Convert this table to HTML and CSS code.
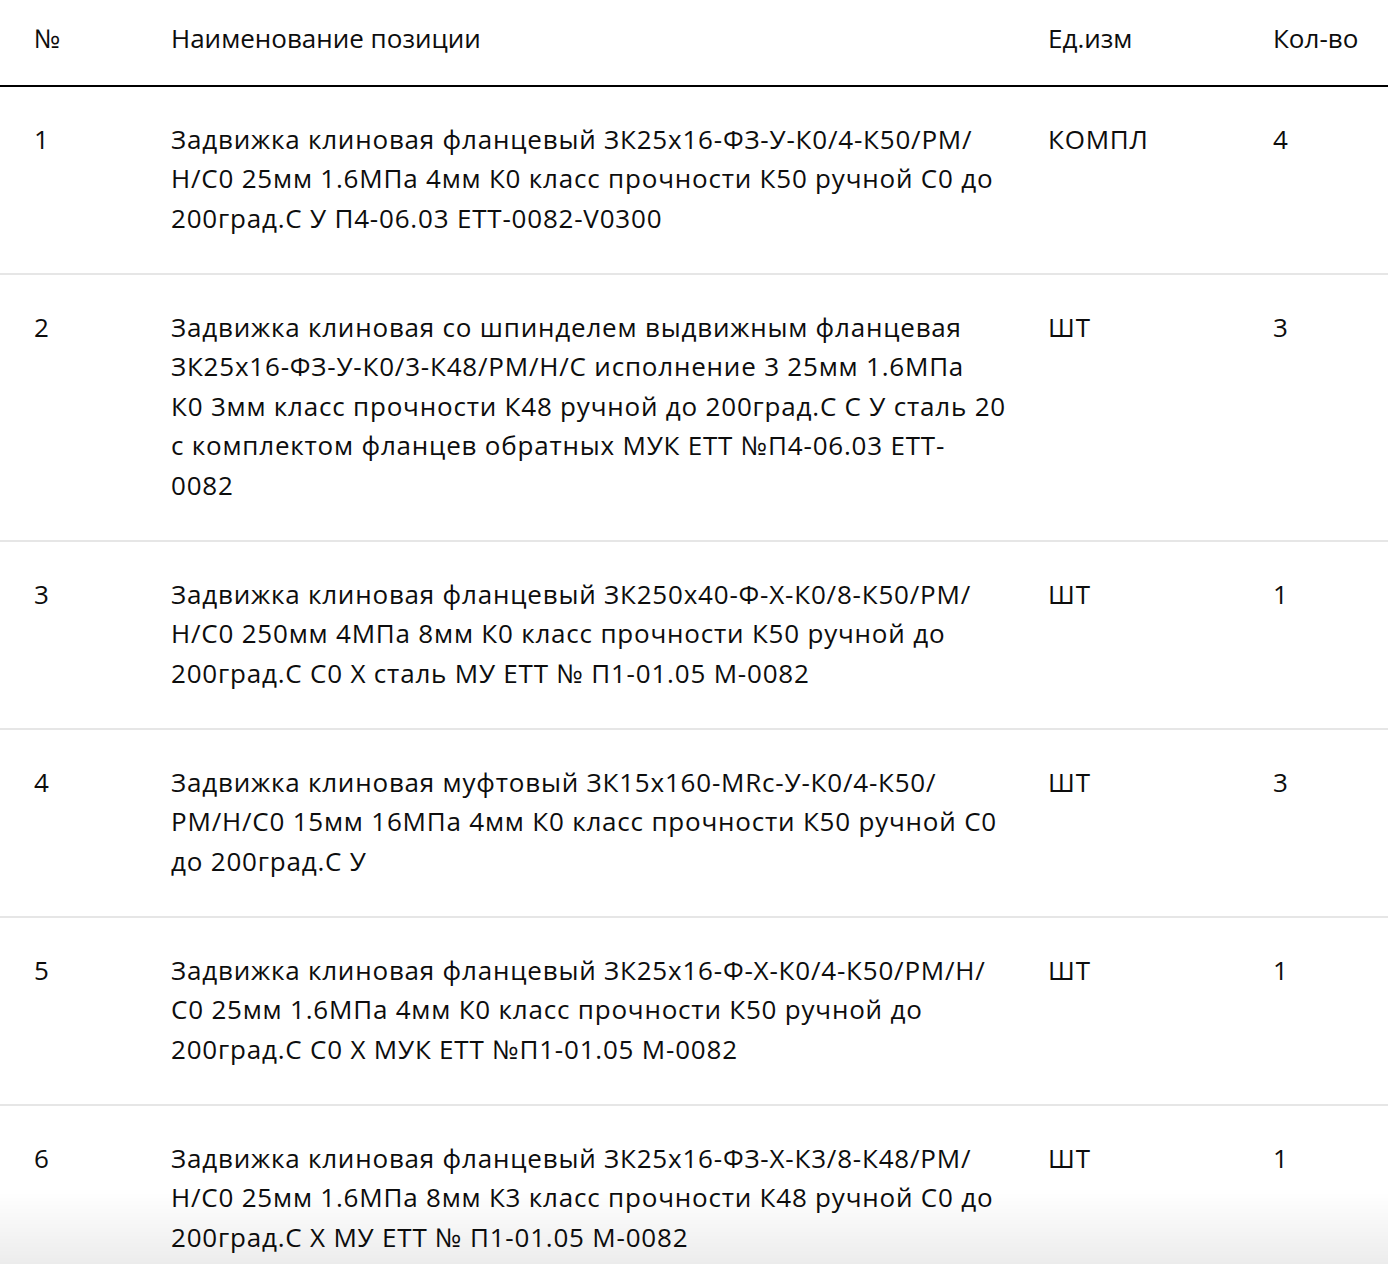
FILE: index.html
```html
<!DOCTYPE html>
<html lang="ru">
<head>
<meta charset="utf-8">
<title>Позиции</title>
<link rel="stylesheet" href="styles.css">
</head>
<body>
<div class="table">
  <div class="row head">
    <div class="cell">№</div>
    <div class="cell name">Наименование позиции</div>
    <div class="cell">Ед.изм</div>
    <div class="cell">Кол-во</div>
  </div>
  <div class="row">
    <div class="cell">1</div>
    <div class="cell name">Задвижка клиновая фланцевый ЗК25х16-ФЗ-У-К0/4-К50/РМ/<br>Н/С0 25мм 1.6МПа 4мм К0 класс прочности К50 ручной С0 до<br>200град.С У П4-06.03 ЕТТ-0082-V0300</div>
    <div class="cell">КОМПЛ</div>
    <div class="cell">4</div>
  </div>
  <div class="row">
    <div class="cell">2</div>
    <div class="cell name">Задвижка клиновая со шпинделем выдвижным фланцевая<br>ЗК25х16-ФЗ-У-К0/3-К48/РМ/Н/С исполнение 3 25мм 1.6МПа<br>К0 3мм класс прочности К48 ручной до 200град.С С У сталь 20<br>с комплектом фланцев обратных МУК ЕТТ №П4-06.03 ЕТТ-<br>0082</div>
    <div class="cell">ШТ</div>
    <div class="cell">3</div>
  </div>
  <div class="row">
    <div class="cell">3</div>
    <div class="cell name">Задвижка клиновая фланцевый ЗК250х40-Ф-Х-К0/8-К50/РМ/<br>Н/С0 250мм 4МПа 8мм К0 класс прочности К50 ручной до<br>200град.С С0 Х сталь МУ ЕТТ № П1-01.05 М-0082</div>
    <div class="cell">ШТ</div>
    <div class="cell">1</div>
  </div>
  <div class="row">
    <div class="cell">4</div>
    <div class="cell name">Задвижка клиновая муфтовый ЗК15х160-MRc-У-К0/4-К50/<br>РМ/Н/С0 15мм 16МПа 4мм К0 класс прочности К50 ручной С0<br>до 200град.С У</div>
    <div class="cell">ШТ</div>
    <div class="cell">3</div>
  </div>
  <div class="row">
    <div class="cell">5</div>
    <div class="cell name">Задвижка клиновая фланцевый ЗК25х16-Ф-Х-К0/4-К50/РМ/Н/<br>С0 25мм 1.6МПа 4мм К0 класс прочности К50 ручной до<br>200град.С С0 Х МУК ЕТТ №П1-01.05 М-0082</div>
    <div class="cell">ШТ</div>
    <div class="cell">1</div>
  </div>
  <div class="row">
    <div class="cell">6</div>
    <div class="cell name">Задвижка клиновая фланцевый ЗК25х16-ФЗ-Х-К3/8-К48/РМ/<br>Н/С0 25мм 1.6МПа 8мм К3 класс прочности К48 ручной С0 до<br>200град.С Х МУ ЕТТ № П1-01.05 М-0082</div>
    <div class="cell">ШТ</div>
    <div class="cell">1</div>
  </div>
</div>
<div class="fade"></div>
</body>
</html>
```

FILE: styles.css
```css
html, body {
  margin: 0;
  padding: 0;
  background: #fff;
}
body {
  font-family: "Open Sans", "Noto Sans", sans-serif;
  font-size: 26px;
  line-height: 39.5px;
  color: #0d0d0d;
  overflow: hidden;
  height: 1264px;
}
.table {
  width: 1388px;
}
.row {
  display: grid;
  grid-template-columns: 137px 877px 225px 1fr;
  padding: 33px 0 34.5px 34px;
  border-bottom: 2px solid #e6e6e6;
  letter-spacing: 0.8px;
}
.row.head {
  padding: 19px 0 26px 34px;
  border-bottom: 2px solid #000;
  letter-spacing: 0;
}
.cell.name {
  white-space: nowrap;
}
.fade {
  position: fixed;
  left: 0;
  right: 0;
  bottom: 0;
  height: 72px;
  background: linear-gradient(to bottom, rgba(0,0,0,0), rgba(0,0,0,0.075));
  pointer-events: none;
}
```
